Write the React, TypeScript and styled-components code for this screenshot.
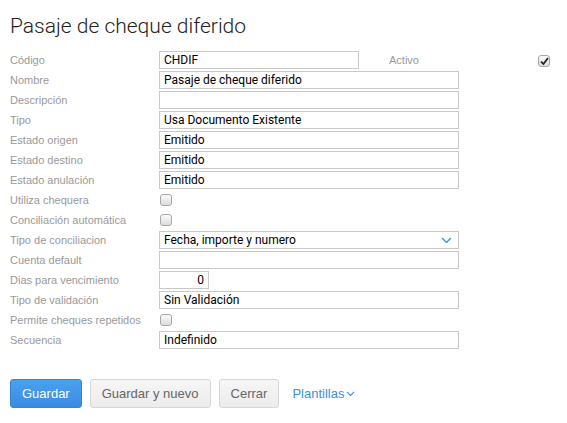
import React from 'react';
import styled, { createGlobalStyle } from 'styled-components';

const GlobalStyle = createGlobalStyle`
  html, body {
    margin: 0;
    padding: 0;
    background: #fff;
  }
  body {
    font-family: "Liberation Sans", Arial, sans-serif;
  }
`;

const Page = styled.div`
  padding: 14px 10px 10px 10px;
  width: 567px;
  box-sizing: border-box;
`;

const Title = styled.h1`
  margin: 0 0 12px 0;
  font-family: Roboto, "Liberation Sans", sans-serif;
  font-weight: 300;
  font-size: 21px;
  line-height: 24px;
  color: #222;
`;

const Form = styled.div`
  display: flex;
  flex-direction: column;
`;

const Row = styled.div`
  display: grid;
  grid-template-columns: 149px 1fr;
  align-items: center;
  height: 20px;
`;

const Label = styled.label`
  font-size: 11px;
  color: #999;
  white-space: nowrap;
`;

const Field = styled.div`
  display: flex;
  align-items: center;
`;

const Input = styled.div<{ $width?: number; $right?: boolean }>`
  box-sizing: border-box;
  width: ${(p) => p.$width ?? 300}px;
  height: 18px;
  border: 1px solid #c8c8c8;
  background: #fff;
  font-family: Roboto, "Liberation Sans", sans-serif;
  font-size: 12px;
  line-height: 16px;
  color: #000;
  padding: 0 4px;
  text-align: ${(p) => (p.$right ? 'right' : 'left')};
  white-space: nowrap;
  overflow: hidden;
`;

const Select = styled(Input)`
  display: flex;
  align-items: center;
  justify-content: space-between;
  padding-right: 6px;
`;

const Check = styled.span`
  box-sizing: border-box;
  display: inline-flex;
  align-items: center;
  justify-content: center;
  width: 12px;
  height: 12px;
  margin-left: 1px;
  border: 1px solid #a8a8a8;
  border-radius: 3px;
  background: linear-gradient(#fafafa, #dcdcdc);
`;

const SideLabel = styled(Label)`
  margin-left: 30px;
  flex: 1;
`;

const SideCheck = styled(Check)`
  margin-right: 7px;
  margin-top: 1px;
`;

const Actions = styled.div`
  display: flex;
  align-items: center;
  gap: 8px;
  margin-top: 29px;
`;

const Button = styled.button<{ $primary?: boolean }>`
  height: 29px;
  padding: 0 11px;
  border-radius: 3px;
  font-family: "Liberation Sans", Arial, sans-serif;
  font-size: 13px;
  cursor: pointer;
  border: 1px solid ${(p) => (p.$primary ? '#3585d6' : '#d6d6d6')};
  color: ${(p) => (p.$primary ? '#fff' : '#666')};
  background: ${(p) =>
    p.$primary ? 'linear-gradient(#4aa2ef, #3a8be2)' : 'linear-gradient(#f6f6f6, #ececec)'};
`;

const LinkButton = styled.span`
  display: inline-flex;
  align-items: center;
  gap: 2px;
  margin-left: 5px;
  font-family: "Liberation Sans", Arial, sans-serif;
  font-size: 13px;
  color: #3a8fe6;
  cursor: pointer;
`;

const Chevron = ({ size = 10, color = '#4a90e2' }: { size?: number; color?: string }) => (
  <svg width={size} height={size * 0.6} viewBox="0 0 10 6">
    <path d="M1 1 L5 5 L9 1" fill="none" stroke={color} strokeWidth="1.3" />
  </svg>
);

const Tick = () => (
  <svg width="9" height="8" viewBox="0 0 9 8">
    <path d="M1 4.5 L3.4 7 L8 1" fill="none" stroke="#222" strokeWidth="1.8" />
  </svg>
);

type Item =
  | { label: string; kind: 'text'; value?: string; width?: number; right?: boolean }
  | { label: string; kind: 'check' }
  | { label: string; kind: 'select'; value: string };

const fields: Item[] = [
  { label: 'Nombre', kind: 'text', value: 'Pasaje de cheque diferido' },
  { label: 'Descripción', kind: 'text' },
  { label: 'Tipo', kind: 'text', value: 'Usa Documento Existente' },
  { label: 'Estado origen', kind: 'text', value: 'Emitido' },
  { label: 'Estado destino', kind: 'text', value: 'Emitido' },
  { label: 'Estado anulación', kind: 'text', value: 'Emitido' },
  { label: 'Utiliza chequera', kind: 'check' },
  { label: 'Conciliación automática', kind: 'check' },
  { label: 'Tipo de conciliacion', kind: 'select', value: 'Fecha, importe y numero' },
  { label: 'Cuenta default', kind: 'text' },
  { label: 'Dias para vencimiento', kind: 'text', value: '0', width: 50, right: true },
  { label: 'Tipo de validación', kind: 'text', value: 'Sin Validación' },
  { label: 'Permite cheques repetidos', kind: 'check' },
  { label: 'Secuencia', kind: 'text', value: 'Indefinido' },
];

const App: React.FC = () => {
  return (
    <Page>
      <GlobalStyle />
      <Title>Pasaje de cheque diferido</Title>
      <Form>
        <Row>
          <Label>Código</Label>
          <Field>
            <Input $width={200}>CHDIF</Input>
            <SideLabel>Activo</SideLabel>
            <SideCheck>
              <Tick />
            </SideCheck>
          </Field>
        </Row>
        {fields.map((f, i) => (
          <Row key={i}>
            <Label>{f.label}</Label>
            <Field>
              {f.kind === 'check' && <Check />}
              {f.kind === 'select' && (
                <Select>
                  <span>{f.value}</span>
                  <Chevron size={11} />
                </Select>
              )}
              {f.kind === 'text' && (
                <Input $width={f.width} $right={f.right}>
                  {f.value}
                </Input>
              )}
            </Field>
          </Row>
        ))}
      </Form>
      <Actions>
        <Button $primary>Guardar</Button>
        <Button>Guardar y nuevo</Button>
        <Button>Cerrar</Button>
        <LinkButton>
          Plantillas <Chevron size={9} color="#3a8fe6" />
        </LinkButton>
      </Actions>
    </Page>
  );
};

export default App;
